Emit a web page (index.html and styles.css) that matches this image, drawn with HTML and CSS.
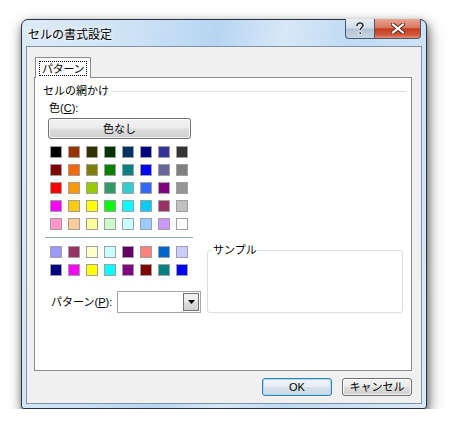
FILE: index.html
```html
<!DOCTYPE html>
<html lang="ja">
<head>
<meta charset="utf-8">
<title>セルの書式設定</title>
<link rel="stylesheet" href="styles.css">
</head>
<body>
<div class="window">
  <div class="titlebar">
    <span class="title">セルの書式設定</span>
    <div class="caption-buttons">
      <div class="cap-btn help">
        <svg width="10" height="13" viewBox="0 0 10 13"><path d="M2 4 C2 1.5 3.5 1 5 1 C6.8 1 8 2 8 3.6 C8 5.2 5.2 5.6 5.2 8" fill="none" stroke="#fff" stroke-width="3.2"/><path d="M2 4 C2 1.5 3.5 1 5 1 C6.8 1 8 2 8 3.6 C8 5.2 5.2 5.6 5.2 8" fill="none" stroke="#2b3440" stroke-width="1.6"/><rect x="3.6" y="9.6" width="3.2" height="3" fill="#fff"/><rect x="4.4" y="10.3" width="1.7" height="1.7" fill="#2b3440"/></svg>
      </div>
      <div class="cap-btn close">
        <svg width="14" height="11" viewBox="0 0 14 11"><path d="M2 1.5 L12 9.5 M12 1.5 L2 9.5" stroke="#5a2018" stroke-width="4" stroke-linecap="square"/><path d="M2 1.5 L12 9.5 M12 1.5 L2 9.5" stroke="#ffffff" stroke-width="2.2" stroke-linecap="square"/></svg>
      </div>
    </div>
  </div>
  <div class="client">
    <div class="tabs">
      <div class="tab"><span class="tab-label">パターン</span></div>
    </div>
    <div class="panel">
      <div class="group-header"><span>セルの網かけ</span><span class="rule"></span></div>
      <div class="main">
        <div class="left">
          <div class="color-label">色(<u>C</u>):</div>
          <div class="btn none-btn">色なし</div>
          <div class="swatches">
            <i style="background:#000000"></i><i style="background:#993300"></i><i style="background:#333300"></i><i style="background:#003300"></i><i style="background:#003366"></i><i style="background:#000080"></i><i style="background:#333399"></i><i style="background:#333333"></i>
            <i style="background:#800000"></i><i style="background:#ff6600"></i><i style="background:#808000"></i><i style="background:#008000"></i><i style="background:#008080"></i><i style="background:#0000ff"></i><i style="background:#666699"></i><i style="background:#808080"></i>
            <i style="background:#ff0000"></i><i style="background:#ff9900"></i><i style="background:#99cc00"></i><i style="background:#339966"></i><i style="background:#33cccc"></i><i style="background:#3366ff"></i><i style="background:#800080"></i><i style="background:#969696"></i>
            <i style="background:#ff00ff"></i><i style="background:#ffcc00"></i><i style="background:#ffff00"></i><i style="background:#00ff00"></i><i style="background:#00ffff"></i><i style="background:#00ccff"></i><i style="background:#993366"></i><i style="background:#c0c0c0"></i>
            <i style="background:#ff99cc"></i><i style="background:#ffcc99"></i><i style="background:#ffff99"></i><i style="background:#ccffcc"></i><i style="background:#ccffff"></i><i style="background:#99ccff"></i><i style="background:#cc99ff"></i><i style="background:#ffffff"></i>
          </div>
          <div class="separator"></div>
          <div class="swatches extra">
            <i style="background:#9999ff"></i><i style="background:#993366"></i><i style="background:#ffffcc"></i><i style="background:#ccffff"></i><i style="background:#660066"></i><i style="background:#ff8080"></i><i style="background:#0066cc"></i><i style="background:#ccccff"></i>
            <i style="background:#000080"></i><i style="background:#ff00ff"></i><i style="background:#ffff00"></i><i style="background:#00ffff"></i><i style="background:#800080"></i><i style="background:#800000"></i><i style="background:#008080"></i><i style="background:#0000ff"></i>
          </div>
          <div class="pattern-row">
            <span class="pattern-label">パターン(<u>P</u>):</span>
            <div class="combo">
              <span class="combo-field"></span>
              <span class="combo-btn"><svg width="7" height="4" viewBox="0 0 7 4"><path d="M0 0 H7 L3.5 4 Z" fill="#000"/></svg></span>
            </div>
          </div>
        </div>
        <fieldset class="sample">
          <legend>サンプル</legend>
        </fieldset>
      </div>
    </div>
    <div class="footer">
      <div class="btn ok">OK</div>
      <div class="btn">キャンセル</div>
    </div>
  </div>
</div>
</body>
</html>
```

FILE: styles.css
```css
* { box-sizing: border-box; }

html, body {
  margin: 0;
  background: #ffffff;
}

body {
  padding: 19px 0 0 21px;
  font-family: "Liberation Sans", "Noto Sans CJK JP", sans-serif;
  font-size: 11px;
  color: #000;
}

.window {
  width: 406px;
  height: 390px;
  border: 1px solid #2a3440;
  border-radius: 7px 7px 3px 3px;
  background:
    linear-gradient(100deg, rgba(255,255,255,0.4) 0%, rgba(255,255,255,0.1) 25%, rgba(160,200,240,0.4) 42%, rgba(255,255,255,0.3) 56%, rgba(170,205,240,0.2) 70%, rgba(255,255,255,0.35) 100%),
    #c6def4;
  box-shadow: 1px 4px 10px rgba(0,0,0,0.55), 3px 7px 18px rgba(0,0,0,0.25);
  display: flex;
  flex-direction: column;
}

.titlebar {
  height: 26px;
  display: flex;
  justify-content: space-between;
  align-items: flex-start;
}

.title {
  font-family: "Noto Sans CJK JP", sans-serif;
  font-size: 12px;
  line-height: 14px;
  margin: 7px 0 0 6px;
  text-shadow: 0 0 6px rgba(255,255,255,0.9), 0 0 3px rgba(255,255,255,0.9);
}

.caption-buttons {
  display: flex;
  margin: -1px 5px 0 0;
}

.cap-btn {
  height: 20px;
  border: 1px solid #4c5866;
  border-top: none;
  display: flex;
  align-items: center;
  justify-content: center;
}

.help {
  width: 29px;
  border-right: none;
  border-radius: 0 0 0 4px;
  background: linear-gradient(#e6eef6 0%, #d3deea 48%, #b4c3d3 52%, #c7d6e4 100%);
}

.close {
  width: 47px;
  border-radius: 0 0 4px 0;
  background: linear-gradient(#e8a597 0%, #d8785f 45%, #c43d20 52%, #d3593b 85%, #e3917c 100%);
}

.client {
  flex: 1;
  margin: 0 4px 4px 4px;
  border: 1px solid #8291a3;
  background: #f0f0f0;
  display: flex;
  flex-direction: column;
}

.tabs {
  display: flex;
  padding: 10px 0 0 8px;
}

.tab {
  position: relative;
  z-index: 1;
  width: 56px;
  height: 21px;
  margin-bottom: -1px;
  border: 1px solid #898c95;
  border-bottom: none;
  background: #ffffff;
  padding: 3px 0 0 3px;
}

.tab-label {
  display: inline-block;
  height: 15px;
  padding: 0 2px;
  border: 1px dotted #000;
  font-family: "Noto Sans CJK JP", sans-serif;
  line-height: 13px;
  letter-spacing: -0.3px;
}

.panel {
  width: 378px;
  height: 294px;
  margin-left: 7px;
  border: 1px solid #898c95;
  background: #ffffff;
  display: flex;
  flex-direction: column;
}

.group-header {
  display: flex;
  align-items: center;
  margin: 6px 5px 0 8px;
  line-height: 14px;
}

.rule {
  flex: 1;
  height: 1px;
  margin-left: 3px;
  background: #d5dfe5;
}

.main {
  display: flex;
  align-items: flex-end;
}

.left {
  width: 166px;
  display: flex;
  flex-direction: column;
}

.color-label {
  margin: 3px 0 0 14px;
  line-height: 14px;
}

.btn {
  display: flex;
  align-items: center;
  justify-content: center;
  border: 1px solid #707070;
  border-radius: 3px;
  background: linear-gradient(#f2f2f2 0%, #ebebeb 48%, #dddddd 52%, #cfcfcf 100%);
  box-shadow: inset 0 0 0 1px rgba(255,255,255,0.75);
  line-height: 14px;
}

.none-btn {
  width: 143px;
  height: 21px;
  margin: 3px 0 0 13px;
}

.swatches {
  display: grid;
  grid-template-columns: repeat(8, 12px);
  grid-auto-rows: 12px;
  gap: 6px;
  margin: 7px 0 0 15px;
}

.swatches i {
  display: block;
  border: 1px solid #a0a0a0;
}

.separator {
  width: 148px;
  height: 1px;
  margin: 7px 0 0 10px;
  background: #8ea4c8;
}

.swatches.extra {
  margin-top: 8px;
}

.pattern-row {
  display: flex;
  align-items: center;
  margin: 15px 0 0 16px;
}

.pattern-label {
  width: 66px;
  line-height: 14px;
}

.combo {
  display: flex;
  width: 84px;
  height: 22px;
  border: 1px solid #a5a5a5;
  background: #fff;
  padding: 1px;
}

.combo-field {
  flex: 1;
}

.combo-btn {
  width: 16px;
  display: flex;
  align-items: center;
  justify-content: center;
  border: 1px solid #707070;
  background: linear-gradient(#f2f2f2 0%, #ebebeb 48%, #dddddd 52%, #cfcfcf 100%);
}

.sample {
  width: 196px;
  height: 70px;
  margin: 0 0 0 6px;
  padding: 0;
  border: 1px solid #d5dfe5;
  border-radius: 3px;
}

.sample legend {
  margin-left: 4px;
  padding: 0 1px;
  line-height: 14px;
}

.footer {
  display: flex;
  justify-content: flex-end;
  gap: 10px;
  padding: 7px 9px 0 0;
}

.footer .btn {
  width: 70px;
  height: 18px;
}

.footer .ok {
  border-color: #3c7fb1;
  box-shadow: inset 0 0 0 1px #9fdcf8;
  background: linear-gradient(#eef5fa 0%, #e6eef5 48%, #d6e2ec 52%, #cbd9e5 100%);
}
```
